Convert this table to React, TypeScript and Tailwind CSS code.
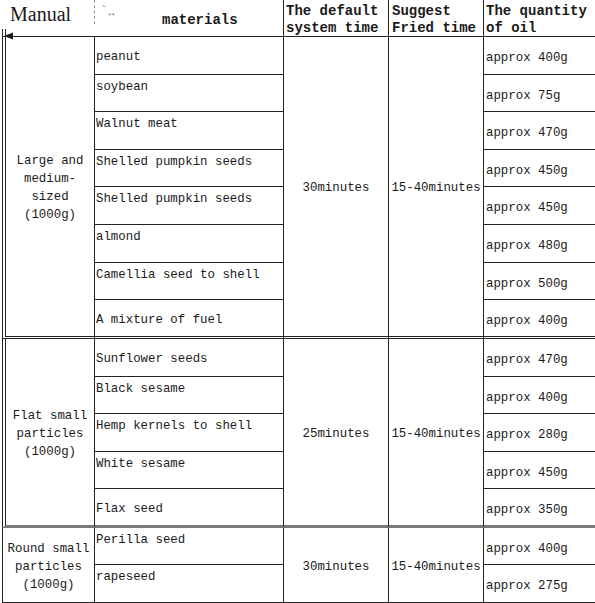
import React from "react";

type Row = { name: string; oil: string; center?: boolean };
type Group = { label: string[]; time: string; rows: Row[] };

const groups: Group[] = [
  {
    label: ["Large and", "medium-", "sized", "(1000g)"],
    time: "30minutes",
    rows: [
      { name: "peanut", oil: "approx 400g", center: true },
      { name: "soybean", oil: "approx 75g" },
      { name: "Walnut meat", oil: "approx 470g" },
      { name: "Shelled pumpkin seeds", oil: "approx 450g" },
      { name: "Shelled pumpkin seeds", oil: "approx 450g" },
      { name: "almond", oil: "approx 480g" },
      { name: "Camellia seed to shell", oil: "approx 500g" },
      { name: "A mixture of fuel", oil: "approx 400g", center: true },
    ],
  },
  {
    label: ["Flat small", "particles", "(1000g)"],
    time: "25minutes",
    rows: [
      { name: "Sunflower seeds", oil: "approx 470g", center: true },
      { name: "Black sesame", oil: "approx 400g" },
      { name: "Hemp kernels to shell", oil: "approx 280g" },
      { name: "White sesame", oil: "approx 450g" },
      { name: "Flax seed", oil: "approx 350g", center: true },
    ],
  },
  {
    label: ["Round small", "particles", "(1000g)"],
    time: "30minutes",
    rows: [
      { name: "Perilla seed", oil: "approx 400g" },
      { name: "rapeseed", oil: "approx 275g" },
    ],
  },
];

// bottom edge of each group: double, thick grey, plain
const groupBottom = [
  "border-b-[3px] [border-bottom-style:double] border-b-[#222]",
  "border-b-[3px] [border-bottom-style:solid] border-b-[#7a7a7a]",
  "border-b border-b-[#222]",
];
const groupLeft = [
  "border-l-[4px] [border-left-style:double]",
  "border-l-[4px] [border-left-style:double]",
  "border-l",
];
const spans = ["row-span-8", "row-span-5", "row-span-2"];

export default function App() {
  return (
    <div className="relative h-[603px] w-[595px] overflow-hidden bg-white text-[12.4px] leading-[15px] text-[#1a1a1a] [font-family:'Liberation_Mono',monospace]">
      <div className="grid grid-cols-[93px_189px_105px_95px_111px] grid-rows-[37px_38px_37px_38px_37px_38px_38px_37px_39px_38px_37px_38px_37px_39px_37px_38px] pl-[2px]">
        {/* header */}
        <div className="flex flex-col justify-between border-b border-[#222]">
          <span className="pl-[8px] pt-[2px] text-[20px] leading-[24px] [font-family:'Liberation_Serif',serif]">
            Manual
          </span>
          <span className="h-[7px] w-[4px] border-l-[4px] border-double border-[#222]" />
        </div>
        <div className="relative border-b border-r border-[#222] pl-[67px] pt-[12px] text-[14px] font-bold leading-[17px]">
          <div className="absolute left-[-1px] top-0 h-[24px] border-l border-dashed border-[#999]" />
          <span className="absolute left-[5px] top-[5px] text-[13px] font-normal leading-[13px] text-[#666]">`‥</span>
          materials
        </div>
        <div className="border-b border-r border-[#222] pl-[2px] pt-[3px] text-[14px] font-bold leading-[17px]">
          The default
          <br />
          system time
        </div>
        <div className="border-b border-r border-[#222] pl-[3px] pt-[3px] text-[14px] font-bold leading-[17px]">
          Suggest
          <br />
          Fried time
        </div>
        <div className="border-b border-[#222] pl-[2px] pt-[3px] text-[14px] font-bold leading-[17px]">
          The quantity
          <br />
          of oil
        </div>

        {groups.map((g, gi) =>
          g.rows.map((r, ri) => {
            const last = ri === g.rows.length - 1;
            const bottom = last ? groupBottom[gi] : "border-b border-b-[#222]";
            const cells = [];
            if (ri === 0) {
              cells.push(
                <div
                  key={`c${gi}`}
                  className={`${spans[gi]} ${groupLeft[gi]} ${groupBottom[gi]} flex items-center justify-center border-r border-l-[#222] border-r-[#222] pt-[3px] text-center leading-[18px]`}
                >
                  <div>
                    {g.label.map((l, i) => (
                      <div key={i}>{l}</div>
                    ))}
                  </div>
                </div>
              );
            }
            cells.push(
              <div
                key={`m${gi}-${ri}`}
                className={`${bottom} border-r border-r-[#222] pl-[1px] ${
                  r.center ? "flex items-center pt-[4px]" : "pt-[5px]"
                }`}
              >
                {r.name}
              </div>
            );
            if (ri === 0) {
              cells.push(
                <div
                  key={`t${gi}`}
                  className={`${spans[gi]} ${groupBottom[gi]} flex items-center justify-center border-r border-r-[#222] pt-[4px]`}
                >
                  {g.time}
                </div>,
                <div
                  key={`s${gi}`}
                  className={`${spans[gi]} ${groupBottom[gi]} flex items-center justify-center border-r border-r-[#222] pt-[4px]`}
                >
                  15-40minutes
                </div>
              );
            }
            cells.push(
              <div key={`o${gi}-${ri}`} className={`${bottom} flex items-center pl-[2px] pt-[6px]`}>
                {r.oil}
              </div>
            );
            return cells;
          })
        )}
      </div>

      {/* arrow head on the header rule */}
      <svg className="absolute left-0 top-[30px]" width="16" height="12" viewBox="0 0 16 12">
        <polygon points="4,6 13,2.5 13,9.5" fill="#1a1a1a" />
      </svg>
    </div>
  );
}
